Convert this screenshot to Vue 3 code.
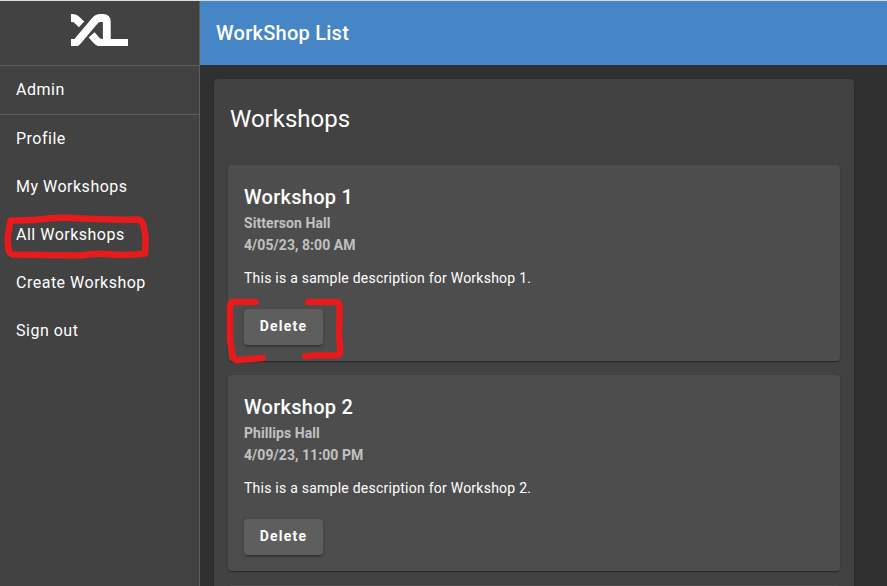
<script setup>
const links = ['Profile', 'My Workshops', 'All Workshops', 'Create Workshop', 'Sign out']

const workshops = [
  { id: 1, place: 'Sitterson Hall', date: '4/05/23, 8:00 AM' },
  { id: 2, place: 'Phillips Hall', date: '4/09/23, 11:00 PM' },
]
</script>

<template>
  <div class="page">
    <aside class="sidebar">
      <div class="brand">
        <svg class="logo" width="57" height="32" viewBox="0 0 57 32" fill="none" stroke="#fff" stroke-width="7.8">
          <path d="M0 29h3q2 0 3.800-2L24.300 6.300q2-2.300 5-2.300h2.500q4 0 4 4.200V29" />
          <path d="M0 4h1q3 0 5 2L10.600 10.400" />
          <path d="M57 29H31.500q-3.600 0-6-2.700L20.600 20.800" />
        </svg>
      </div>
      <div class="role">Admin</div>
      <nav>
        <a v-for="link in links" :key="link" class="link">{{ link }}</a>
      </nav>
    </aside>

    <main class="main">
      <header class="toolbar">WorkShop List</header>
      <section class="panel">
        <h1>Workshops</h1>
        <article v-for="w in workshops" :key="w.id" class="card">
          <h2>Workshop {{ w.id }}</h2>
          <p class="meta">{{ w.place }}</p>
          <p class="meta">{{ w.date }}</p>
          <p class="description">This is a sample description for Workshop {{ w.id }}.</p>
          <button type="button">Delete</button>
        </article>
        <article class="card"></article>
      </section>
    </main>

    <!-- Hand-drawn markers over the menu entry and the first delete button -->
    <svg class="marks" width="887" height="586" viewBox="0 0 887 586" fill="none" stroke="#e71b1b" stroke-linecap="round" stroke-linejoin="round">
      <path stroke-width="6.5" d="M10.5 220.5Q31 221 48 218.5Q65 217 82 218.5Q110 220 138 219.5Q142 220 143.5 226Q146 235 145.500 243L145 253.500Q125 256 108 254Q94 253 80 255.500Q50 255 13 254.500Q8 253 8.500 248Q7 240 8.500 232Z" />
      <path stroke-width="6.5" d="M255.500 302H237Q230 301 230 306V340L232.500 355Q233 360 238 360Q250 359 262.500 358" />
      <path stroke-width="6.5" d="M308 302H336Q339.500 302 339.500 307V321Q338.500 336 340 344V352Q340 355.500 335 355.500H322Q313 355 305.500 356.500" />
    </svg>
  </div>
</template>

<style>
body {
  margin: 0;
  overflow: hidden;
}
</style>

<style scoped>
.page {
  box-sizing: border-box;
  position: relative;
  display: flex;
  width: 887px;
  height: 586px;
  overflow: hidden;
  border-top: 1px solid #dadcda;
  background: #303030;
  color: #fff;
  font-family: Roboto, sans-serif;
}
.sidebar {
  box-sizing: border-box;
  flex: none;
  width: 200px;
  border-right: 1px solid #5d5d5d;
  background: #424242;
  font-size: 16px;
  letter-spacing: 0.5px;
}
.brand {
  box-sizing: border-box;
  height: 65px;
  padding: 13px 0 0 71px;
  border-bottom: 1px solid #5d5d5d;
}
.logo {
  display: block;
}
.role {
  height: 48px;
  padding-left: 16px;
  border-bottom: 1px solid #5d5d5d;
  line-height: 47px;
}
.link {
  display: block;
  height: 48px;
  padding-left: 16px;
  line-height: 47px;
}
.main {
  flex: 1;
  min-width: 0;
}
.toolbar {
  height: 64px;
  padding-left: 16px;
  background: #4686c6;
  font-size: 20px;
  font-weight: 500;
  letter-spacing: 0.25px;
  line-height: 64px;
}
.panel {
  box-sizing: border-box;
  width: 640px;
  margin: 14px;
  padding: 0 14px;
  border-radius: 4px;
  background: #424242;
  box-shadow: 0 2px 1px -1px #0003, 0 1px 1px #00000024, 0 1px 3px #0000001f;
}
h1 {
  margin: 0 2px;
  padding: 24px 0 30px;
  font-size: 24px;
  font-weight: 400;
  line-height: 32px;
}
.card {
  box-sizing: border-box;
  height: 196px;
  margin-bottom: 14px;
  padding: 16px;
  border-radius: 4px;
  background: #4d4d4d;
  box-shadow: 0 2px 1px -1px #0003, 0 1px 1px #00000024, 0 1px 3px #0000001f;
}
h2 {
  margin: 0 0 -1px;
  font-size: 20px;
  font-weight: 500;
  letter-spacing: 0.27px;
  line-height: 32px;
}
p {
  margin: 0;
}
.meta {
  color: #c1c1c1;
  font-size: 14px;
  font-weight: 700;
  letter-spacing: 0.06px;
  line-height: 22px;
}
.description {
  padding-top: 12px;
  font-size: 14px;
  letter-spacing: 0.24px;
  line-height: 20px;
}
button {
  display: block;
  width: 79px;
  height: 36px;
  margin-top: 21px;
  padding: 0 0 2px;
  border: 0;
  border-radius: 4px;
  background: #5e5e5e;
  color: #fff;
  font: 700 14px Roboto, sans-serif;
  letter-spacing: 1.25px;
  box-shadow: 0 3px 1px -2px #0003, 0 2px 2px #00000024, 0 1px 5px #0000001f;
}
.marks {
  position: absolute;
  top: -1px;
  left: 0;
  pointer-events: none;
}
</style>
